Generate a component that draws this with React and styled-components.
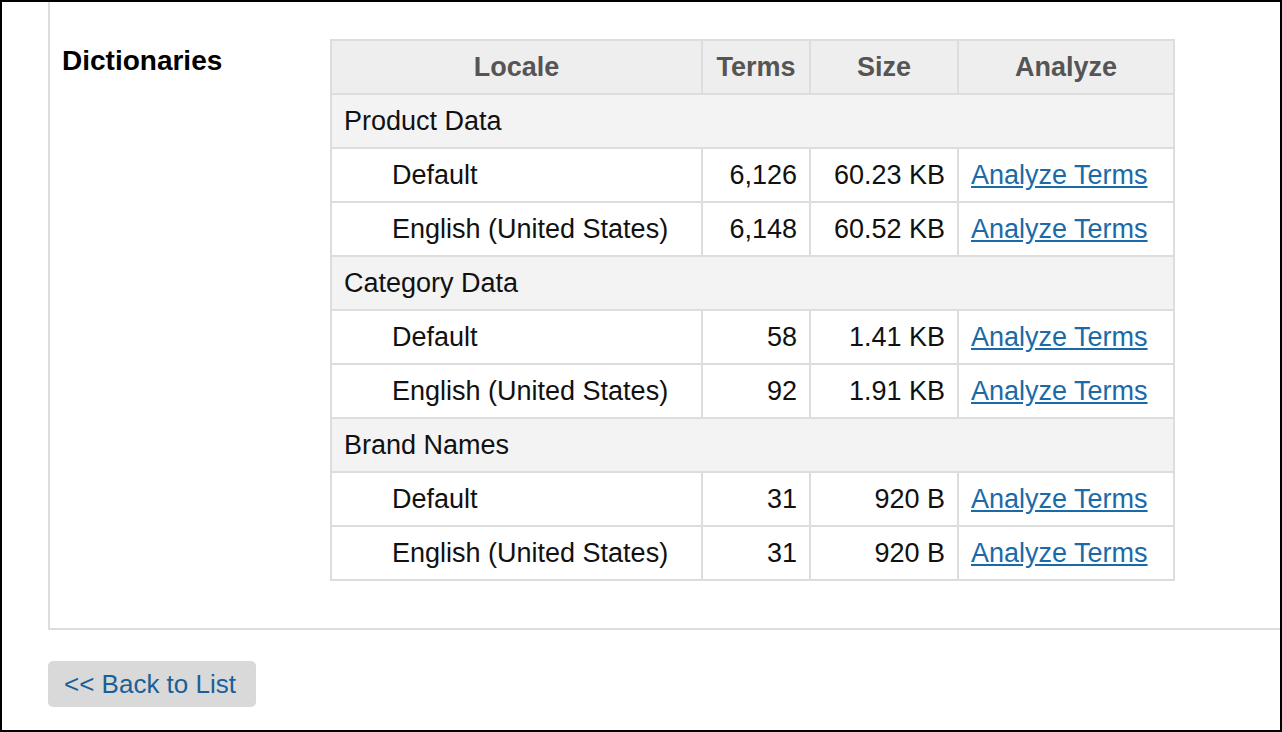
import React from "react";
import styled, { createGlobalStyle } from "styled-components";

const Global = createGlobalStyle`
  body { margin: 0; font-family: "Liberation Sans", Arial, sans-serif; background: #fff; }
`;
const Frame = styled.div`
  box-sizing: border-box; width: 1282px; height: 732px; border: 2px solid #000; overflow: hidden;
`;
const Panel = styled.div`
  margin-left: 46px; border-left: 2px solid #ddd; border-bottom: 2px solid #ddd;
  display: flex; padding: 37px 0 47px 12px;
`;
const Label = styled.div`
  width: 268px; font-weight: bold; font-size: 28px; color: #000; padding-top: 6px;
`;
const Table = styled.table`
  border-collapse: collapse; font-size: 27px; color: #111; table-layout: fixed;
  td, th { border: 2px solid #ddd; height: 54px; padding: 0 12px; box-sizing: border-box; white-space: nowrap; }
`;
const Th = styled.th`
  background: #eee; color: #555; font-weight: bold; text-align: center;
  width: ${p => p.$w}px;
`;
const Group = styled.td`
  background: #f3f3f3; text-align: left;
`;
const Cell = styled.td`
  text-align: ${p => (p.$right ? "right" : "left")};
  padding-left: ${p => (p.$indent ? "60px" : "12px")} !important;
`;
const Link = styled.a`
  color: #1a6aa8; text-decoration: underline; cursor: pointer;
`;
const Button = styled.button`
  margin: 31px 0 0 46px; background: #d9d9d9; border: none; border-radius: 5px;
  height: 46px; width: 208px; font-family: inherit; font-size: 26px; color: #1b5f98;
  text-align: left; padding: 0 16px; white-space: nowrap;
`;

const data = [
  ["Product Data", [["Default", "6,126", "60.23 KB"], ["English (United States)", "6,148", "60.52 KB"]]],
  ["Category Data", [["Default", "58", "1.41 KB"], ["English (United States)", "92", "1.91 KB"]]],
  ["Brand Names", [["Default", "31", "920 B"], ["English (United States)", "31", "920 B"]]],
];

export default function App() {
  return (
    <Frame>
      <Global />
      <Panel>
        <Label>Dictionaries</Label>
        <Table>
          <thead>
            <tr>
              <Th $w={371}>Locale</Th>
              <Th $w={108}>Terms</Th>
              <Th $w={148}>Size</Th>
              <Th $w={216}>Analyze</Th>
            </tr>
          </thead>
          <tbody>
            {data.map(([g, rows]) => (
              <React.Fragment key={g}>
                <tr><Group colSpan={4}>{g}</Group></tr>
                {rows.map((r, i) => (
                  <tr key={i}>
                    <Cell $indent>{r[0]}</Cell>
                    <Cell $right>{r[1]}</Cell>
                    <Cell $right>{r[2]}</Cell>
                    <Cell><Link>Analyze Terms</Link></Cell>
                  </tr>
                ))}
              </React.Fragment>
            ))}
          </tbody>
        </Table>
      </Panel>
      <Button>&lt;&lt; Back to List</Button>
    </Frame>
  );
}
